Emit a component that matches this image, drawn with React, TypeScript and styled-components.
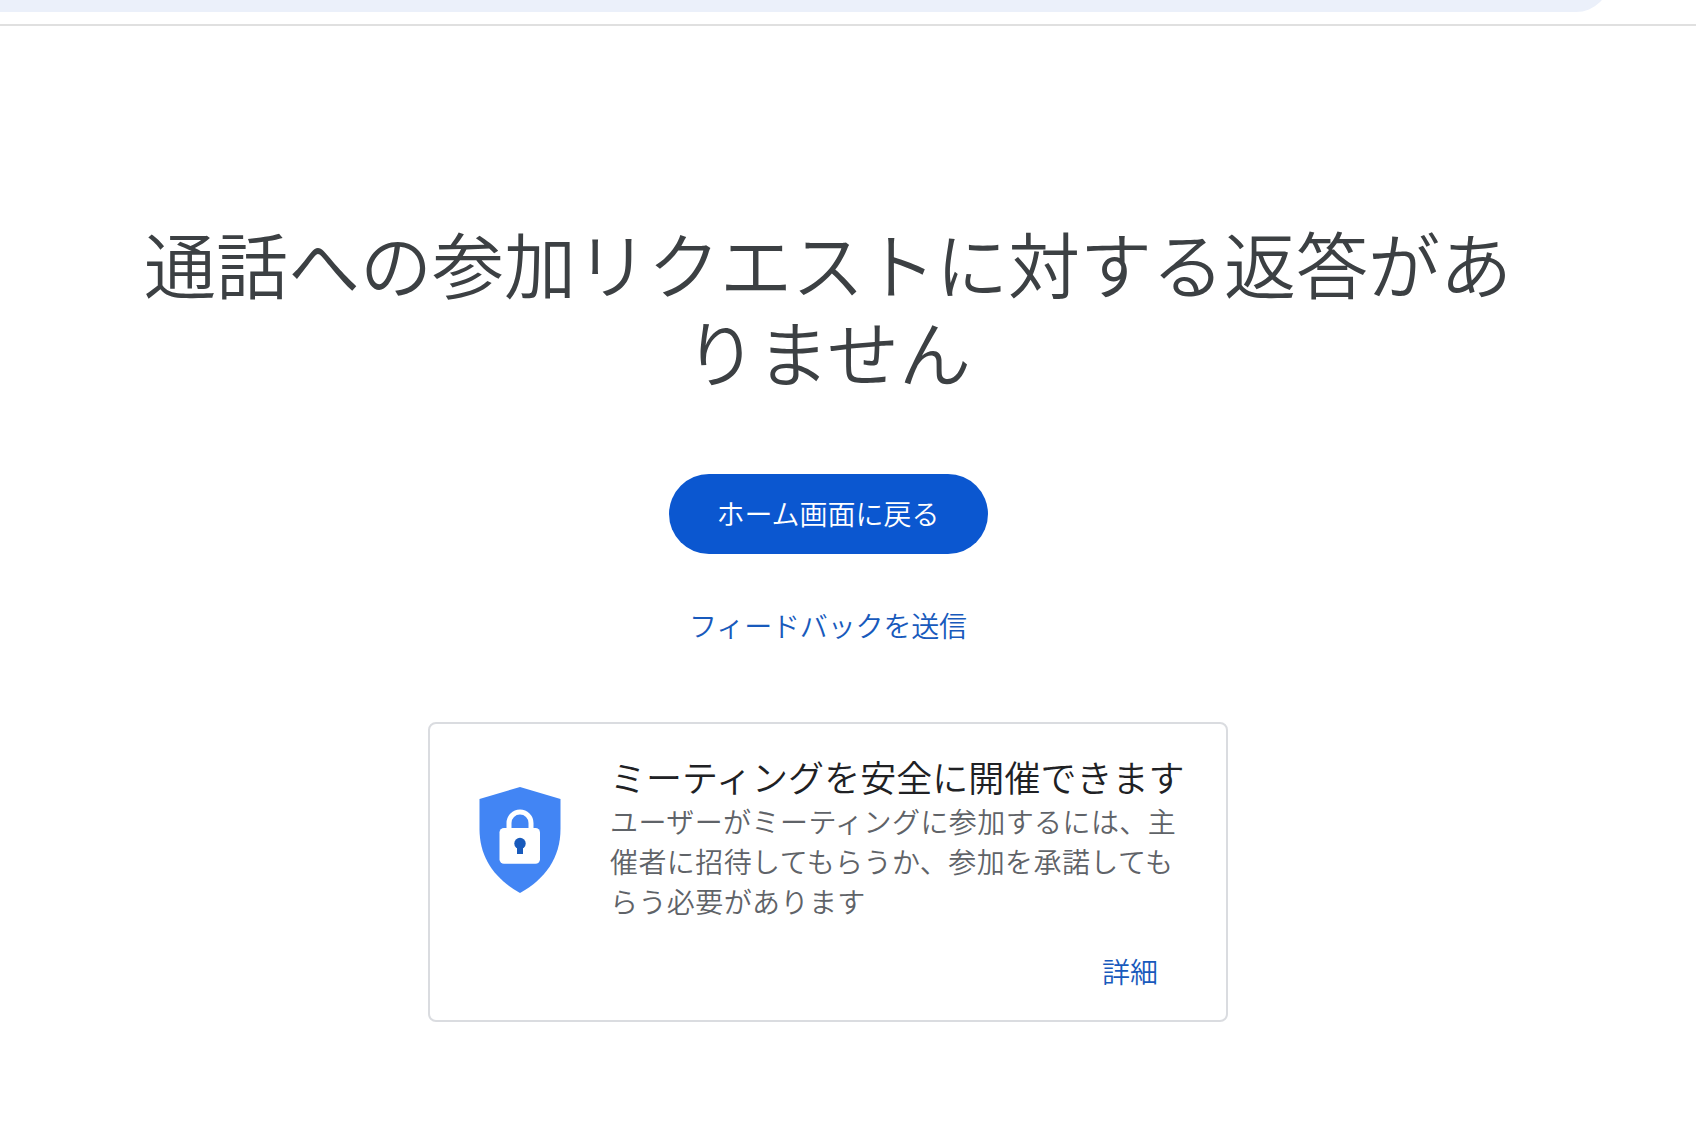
import React from 'react';
import styled, { createGlobalStyle } from 'styled-components';

const GlobalStyle = createGlobalStyle`
  body {
    margin: 0;
    background: #fff;
    font-family: 'Noto Sans CJK JP', sans-serif;
    font-weight: 350;
  }
`;

const S = {
  Page: styled.div`
    height: 1122px;
    overflow: hidden;
    display: flex;
    flex-direction: column;
  `,

  Toolbar: styled.div`
    flex: none;
    height: 24px;
    border-bottom: 2px solid #e0e0e0;
  `,

  AddressClip: styled.div`
    height: 12px;
    overflow: hidden;
    display: flex;
    align-items: flex-end;
  `,

  AddressBar: styled.div`
    flex: none;
    width: 1610px;
    height: 68px;
    border-radius: 0 34px 34px 0;
    background: #ebf0fa;
  `,

  Main: styled.main`
    display: flex;
    flex-direction: column;
    align-items: center;
    padding: 192px 40px 0 0;
  `,

  Title: styled.h1`
    width: 1400px;
    margin: 0 0 80px;
    color: #3c4043;
    font-size: 72px;
    font-weight: 350;
    line-height: 88px;
    text-align: center;
  `,

  HomeButton: styled.button`
    width: 319px;
    height: 80px;
    padding: 0 0 2px;
    border: 0;
    border-radius: 40px;
    background: #0b57d0;
    color: #fff;
    font: inherit;
    font-size: 28px;
    line-height: 40px;
  `,

  Link: styled.a`
    color: #185abc;
    font-size: 28px;
    line-height: 40px;
  `,

  Feedback: styled.div`
    display: flex;
    margin: 51px 0 77px;
    letter-spacing: -0.15px;
  `,

  Card: styled.section`
    width: 800px;
    height: 300px;
    box-sizing: border-box;
    border: 2px solid #dadce0;
    border-radius: 8px;
    display: flex;
    flex-direction: column;
  `,

  CardContent: styled.div`
    display: flex;
    padding: 29px 0 0 48px;
  `,

  Shield: styled.svg`
    flex: none;
    width: 84px;
    height: 108px;
    margin: 33px 48px 0 0;
  `,

  CardTitle: styled.h2`
    margin: 0 0 1px;
    color: #202124;
    font-size: 36px;
    font-weight: 350;
    letter-spacing: 0.05px;
    line-height: 47px;
    white-space: nowrap;
  `,

  CardText: styled.p`
    width: 576px;
    margin: 0;
    color: #5f6368;
    font-size: 28px;
    letter-spacing: 0.42px;
    line-height: 40px;
  `,

  CardActions: styled.div`
    display: flex;
    justify-content: flex-end;
    padding: 30px 68px 0 0;
  `,
};

const ShieldIcon: React.FC = () => (
  <S.Shield viewBox="0 0 84 108">
    <path fill="#4285f4" d="M42 1 82.500 13V43C82.500 72 67 93 42 107 17 93 1.500 72 1.500 43V13Z" />
    <path fill="none" stroke="#fff" strokeWidth="5" d="M31 43V37a11 11 0 0 1 22 0v6" />
    <rect x="21.500" y="42" width="40.500" height="35.700" rx="4.500" fill="#fff" />
    <circle cx="42" cy="57.500" r="5.700" fill="#185abc" />
    <path fill="#185abc" d="M39 59h6v9h-6z" />
  </S.Shield>
);

const App: React.FC = () => {
  return (
    <S.Page>
      <GlobalStyle />
      <S.Toolbar>
        <S.AddressClip>
          <S.AddressBar />
        </S.AddressClip>
      </S.Toolbar>
      <S.Main>
        <S.Title>通話への参加リクエストに対する返答がありません</S.Title>
        <S.HomeButton>ホーム画面に戻る</S.HomeButton>
        <S.Feedback>
          <S.Link>フィードバックを送信</S.Link>
        </S.Feedback>
        <S.Card>
          <S.CardContent>
            <ShieldIcon />
            <div>
              <S.CardTitle>ミーティングを安全に開催できます</S.CardTitle>
              <S.CardText>
                ユーザーがミーティングに参加するには、主催者に招待してもらうか、参加を承諾してもらう必要があります
              </S.CardText>
            </div>
          </S.CardContent>
          <S.CardActions>
            <S.Link>詳細</S.Link>
          </S.CardActions>
        </S.Card>
      </S.Main>
    </S.Page>
  );
};

export default App;
